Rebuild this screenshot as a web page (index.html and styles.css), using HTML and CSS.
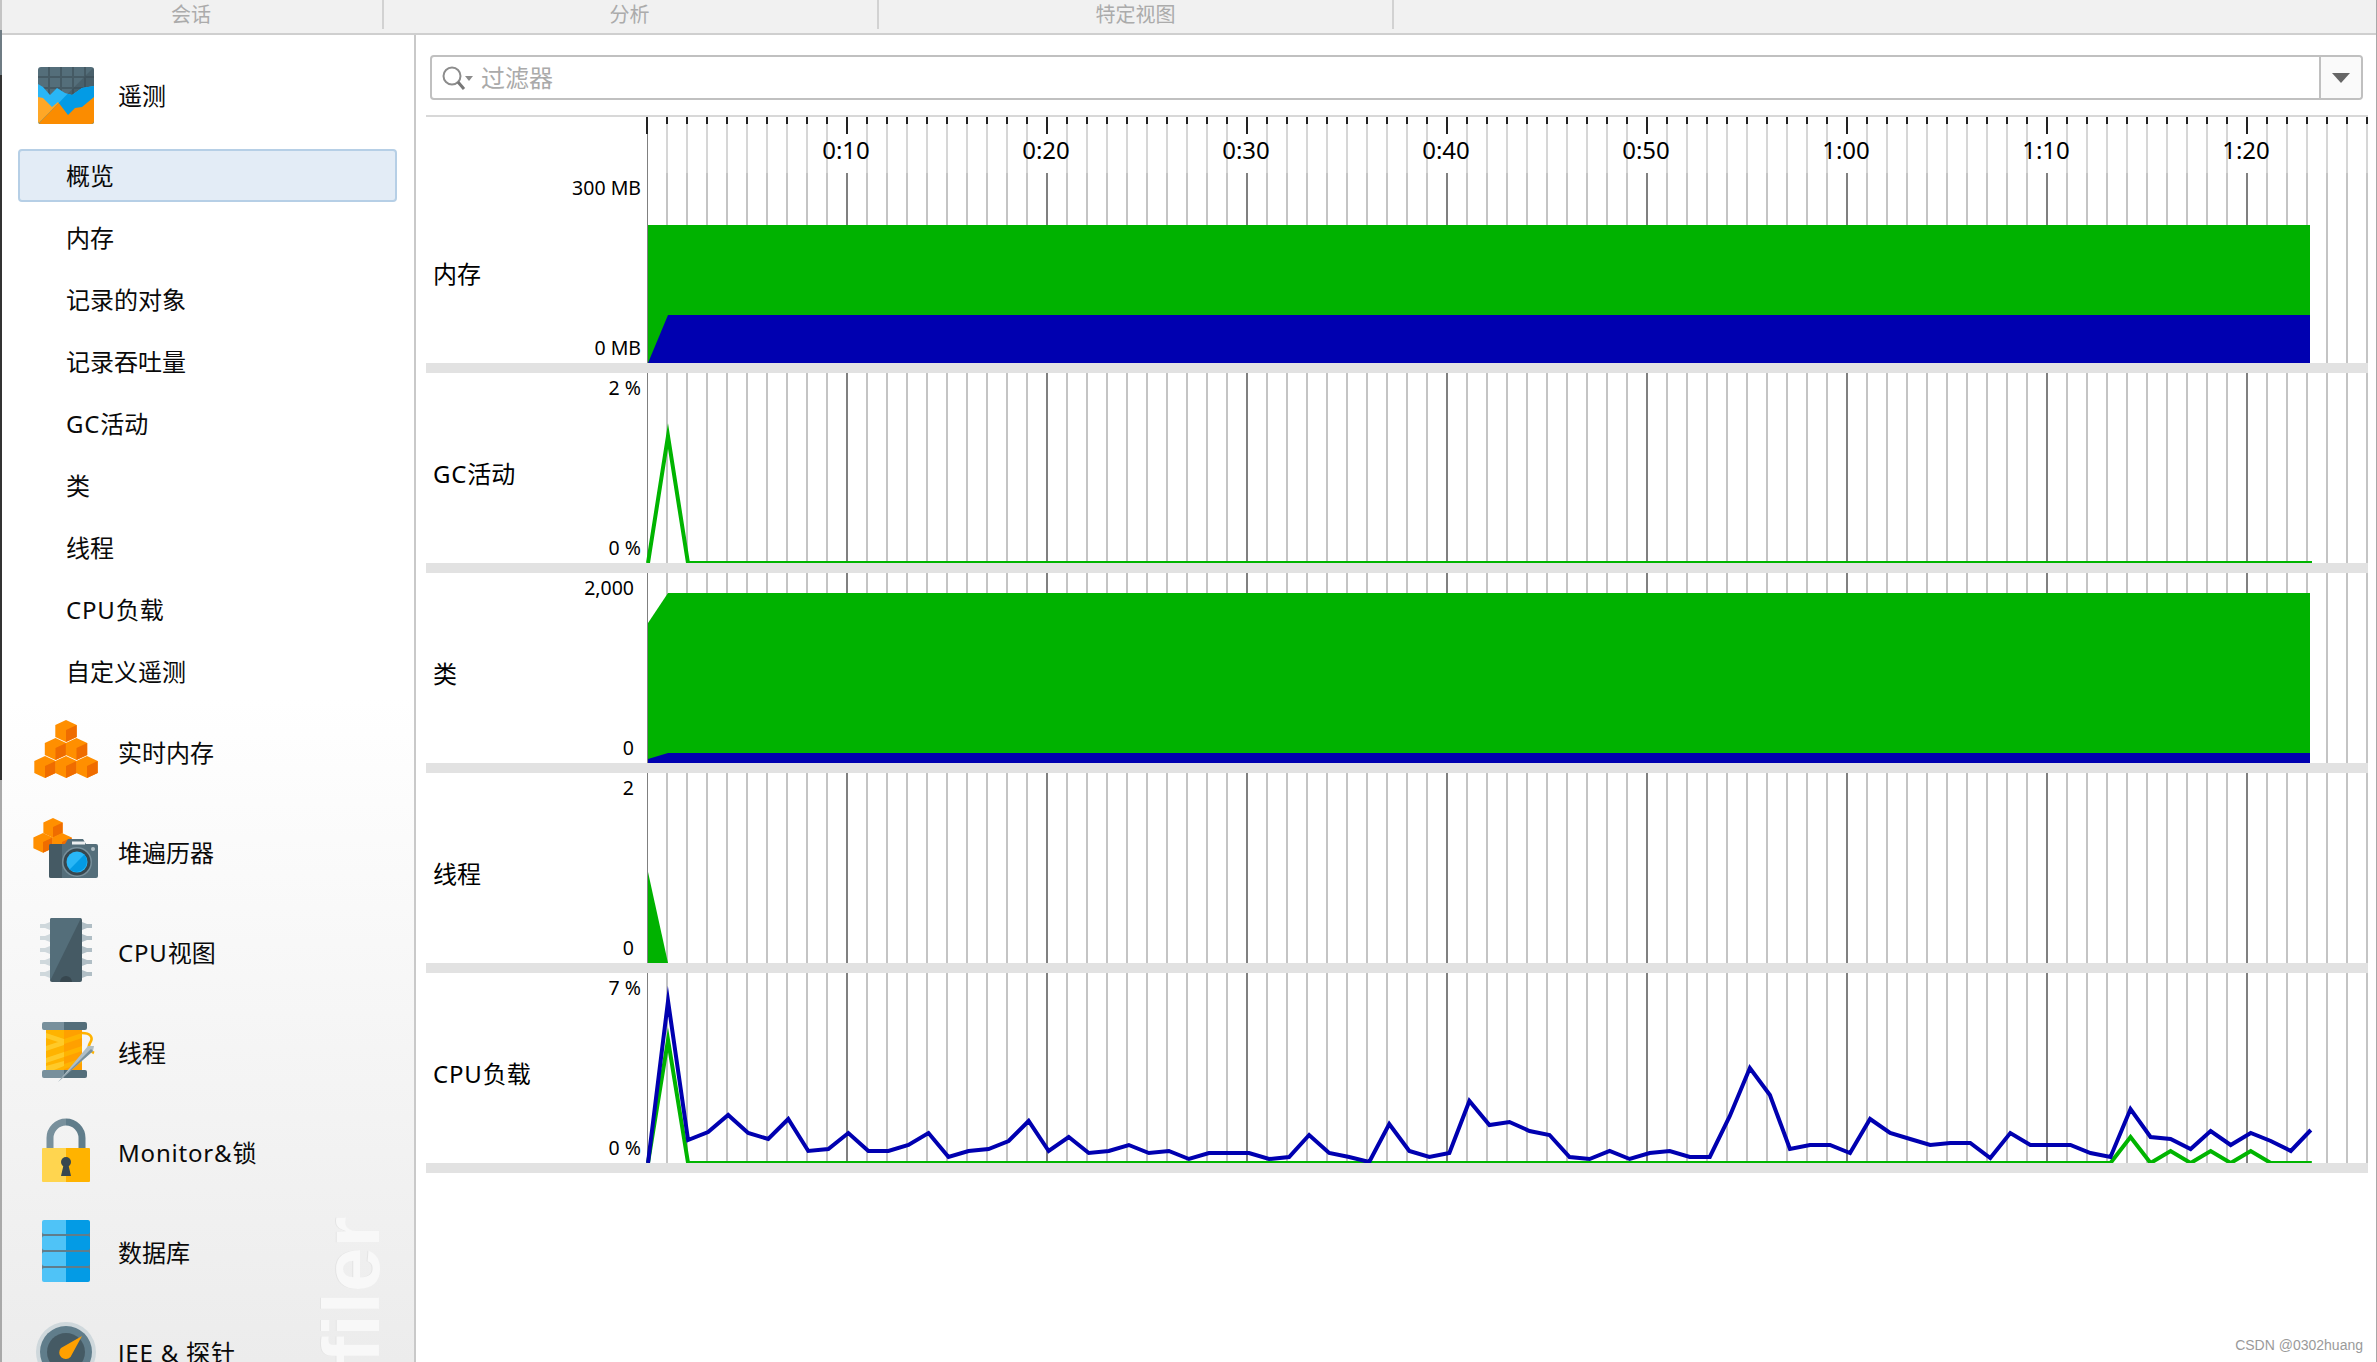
FILE: index.html
```html
<!DOCTYPE html>
<html lang="zh">
<head>
<meta charset="utf-8">
<title>JProfiler 遥测</title>
<link rel="stylesheet" href="styles.css">
</head>
<body>
<svg class="defs" aria-hidden="true">
  <defs>
    <g id="cube">
      <path fill="#ff8f00" d="M0 0L10.7 5V17L0 22L-10.7 17V5Z"/>
      <path fill="#ef6c00" d="M0 10L10.7 5V17L0 22Z"/>
    </g>
  </defs>
</svg>
<div class="screen">
  <div class="edge"></div>
  <div class="window">
    <div class="tabs">
      <div class="tab tab-session">会话</div>
      <div class="tab tab-analysis">分析</div>
      <div class="tab tab-views">特定视图</div>
    </div>
    <div class="body">
      <nav class="sidebar">
        <div class="section section-first">
          <svg class="icon" viewBox="0 0 64 64">
            <defs>
              <clipPath id="tile"><rect x="4" y="3" width="56" height="57" rx="3"/></clipPath>
              <clipPath id="tile-half"><path d="M60 3L4 60H60Z"/></clipPath>
            </defs>
            <g clip-path="url(#tile)">
              <rect x="4" y="3" width="56" height="57" fill="#546e7a"/>
              <path d="M15 3V40M27 3V40M39 3V40M51 3V40M4 13H60M4 24H60" stroke="#455a64" stroke-width="2" fill="none"/>
              <path d="M60 3L4 60H60Z" fill="#37474f" opacity=".35"/>
              <path fill="#29b6f6" d="M4 20L9 23L16 31L23 24L31 29L38 31L48 24L60 22V60H4Z"/>
              <path fill="#ffa726" d="M4 33L9 34L18 43L24 38L34 51L41 44L48 43L60 33V60H4Z"/>
              <g clip-path="url(#tile-half)">
                <path fill="#039be5" d="M4 20L9 23L16 31L23 24L31 29L38 31L48 24L60 22V60H4Z"/>
                <path fill="#fb8c00" d="M4 33L9 34L18 43L24 38L34 51L41 44L48 43L60 33V60H4Z"/>
              </g>
            </g>
          </svg>
          <span>遥测</span>
        </div>
        <ul class="subitems">
          <li class="subitem subitem-active">概览</li>
          <li class="subitem">内存</li>
          <li class="subitem">记录的对象</li>
          <li class="subitem">记录吞吐量</li>
          <li class="subitem"><span class="lat">GC</span>活动</li>
          <li class="subitem">类</li>
          <li class="subitem">线程</li>
          <li class="subitem"><span class="lat">CPU</span>负载</li>
          <li class="subitem">自定义遥测</li>
        </ul>
        <div class="section">
          <svg class="icon" viewBox="0 0 64 64">
            <use href="#cube" x="32" y="1"/>
            <use href="#cube" x="21.5" y="19"/>
            <use href="#cube" x="42.5" y="19"/>
            <use href="#cube" x="11" y="37"/>
            <use href="#cube" x="32" y="37"/>
            <use href="#cube" x="53" y="37"/>
          </svg>
          <span>实时内存</span>
        </div>
        <div class="section">
          <svg class="icon" viewBox="0 0 64 64">
            <g transform="translate(19 -1) scale(.9 .9)"><use href="#cube"/></g>
            <g transform="translate(9 14) scale(.9 .9)"><use href="#cube"/></g>
            <g transform="translate(28 14) scale(.9 .9)"><use href="#cube"/></g>
            <path fill="#546e7a" d="M17 25H31L34 20H49L52 25H62A2 2 0 0 1 64 27V57A2 2 0 0 1 62 59H17A2 2 0 0 1 15 57V27A2 2 0 0 1 17 25Z"/>
            <path fill="#455a64" d="M17 25H28V59H17A2 2 0 0 1 15 57V27A2 2 0 0 1 17 25Z"/>
            <rect x="38" y="22.5" width="13" height="3" fill="#eceff1"/>
            <circle cx="43" cy="43" r="15" fill="#78909c"/>
            <circle cx="43" cy="43" r="13.5" fill="#37474f"/>
            <circle cx="43" cy="43" r="10.5" fill="#29b6f6"/>
            <path fill="#039be5" d="M50.4 35.6A10.5 10.5 0 0 1 35.6 50.4Z"/>
            <circle cx="59" cy="30" r="2" fill="#b0bec5"/>
          </svg>
          <span>堆遍历器</span>
        </div>
        <div class="section">
          <svg class="icon" viewBox="0 0 64 64">
            <path fill="#cfd8dc" d="M16 3L11 5H6V9H11L16 11ZM16 15L11 17H6V21H11L16 23ZM16 27L11 29H6V33H11L16 35ZM16 39L11 41H6V45H11L16 47ZM16 51L11 53H6V57H11L16 59Z"/>
            <path fill="#b0bec5" d="M48 3L53 5H58V9H53L48 11ZM48 15L53 17H58V21H53L48 23ZM48 27L53 29H58V33H53L48 35ZM48 39L53 41H58V45H53L48 47ZM48 51L53 53H58V57H53L48 59Z"/>
            <rect x="16" y="-1" width="32" height="64" rx="2" fill="#455a64"/>
            <path fill="#546e7a" d="M18 -1H47L16 62V1A2 2 0 0 1 18 -1Z"/>
            <path fill="#37474f" d="M26 63A6 6 0 0 1 38 63Z"/>
          </svg>
          <span><span class="lat">CPU</span>视图</span>
        </div>
        <div class="section">
          <svg class="icon" viewBox="0 0 64 64">
            <rect x="12" y="10" width="36" height="42" fill="#ffb300"/>
            <rect x="30" y="10" width="18" height="42" fill="#ffa000"/>
            <path fill="#ffca28" d="M12 14L30 20V25L12 19ZM12 27L30 21V26L12 32ZM12 39L30 33V38L12 44ZM12 47L30 42V47L20 51H12Z"/>
            <path fill="#ffb300" d="M30 20L48 14V19L30 25ZM30 33L48 27V32L30 38ZM30 45L48 39V44L30 50Z"/>
            <path fill="#78909c" d="M10 3H30V11H10A2 2 0 0 1 8 9V5A2 2 0 0 1 10 3ZM10 51H30V59H10A2 2 0 0 1 8 57V53A2 2 0 0 1 10 51Z"/>
            <path fill="#546e7a" d="M30 3H51A2 2 0 0 1 53 5V9A2 2 0 0 1 51 11H30ZM30 51H51A2 2 0 0 1 53 53V57A2 2 0 0 1 51 59H30Z"/>
            <path d="M48 14C56 14 60 18 56 24C53 29 56 32 60 34" fill="none" stroke="#ffb300" stroke-width="2.6"/>
            <path fill="#b0bec5" d="M24 63L54 27L60 27L59 32Z"/>
            <path fill="#78909c" d="M24 63L57 30L59 32Z"/>
          </svg>
          <span>线程</span>
        </div>
        <div class="section">
          <svg class="icon" viewBox="0 0 64 64">
            <path d="M16 31V19A16 16 0 0 1 32 3" fill="none" stroke="#78909c" stroke-width="7"/>
            <path d="M32 3A16 16 0 0 1 48 19V31" fill="none" stroke="#607d8b" stroke-width="7"/>
            <path fill="#ffd54f" d="M9 29H32V63H9A1 1 0 0 1 8 62V30A1 1 0 0 1 9 29Z"/>
            <path fill="#ffb300" d="M32 29H55A1 1 0 0 1 56 30V62A1 1 0 0 1 55 63H32Z"/>
            <circle cx="32" cy="43" r="5" fill="#37474f"/>
            <path fill="#37474f" d="M30 44H34L37 57H27Z"/>
          </svg>
          <span class="lat">Monitor&amp;锁</span>
        </div>
        <div class="section">
          <svg class="icon" viewBox="0 0 64 64">
            <rect x="8" y="8" width="48" height="48" fill="#607d8b"/>
            <g fill="#4fc3f7">
              <path d="M10 1H32V15H10A2 2 0 0 1 8 13V3A2 2 0 0 1 10 1Z"/>
              <path d="M10 17H32V31H10A2 2 0 0 1 8 29V19A2 2 0 0 1 10 17Z"/>
              <path d="M10 33H32V47H10A2 2 0 0 1 8 45V35A2 2 0 0 1 10 33Z"/>
              <path d="M10 49H32V63H10A2 2 0 0 1 8 61V51A2 2 0 0 1 10 49Z"/>
            </g>
            <g fill="#039be5">
              <path d="M32 1H54A2 2 0 0 1 56 3V13A2 2 0 0 1 54 15H32Z"/>
              <path d="M32 17H54A2 2 0 0 1 56 19V29A2 2 0 0 1 54 31H32Z"/>
              <path d="M32 33H54A2 2 0 0 1 56 35V45A2 2 0 0 1 54 47H32Z"/>
              <path d="M32 49H54A2 2 0 0 1 56 51V61A2 2 0 0 1 54 63H32Z"/>
            </g>
          </svg>
          <span>数据库</span>
        </div>
        <div class="section">
          <svg class="icon" viewBox="0 0 64 64">
            <circle cx="32" cy="33" r="30" fill="#cfd8dc"/>
            <circle cx="32" cy="33" r="26" fill="#607d8b"/>
            <circle cx="32" cy="33" r="19" fill="#455a64"/>
            <path fill="#ffa000" d="M48 17L36.5 38A6 6 0 1 1 27 29Z"/>
          </svg>
          <span class="lat">JEE &amp; 探针</span>
        </div>
        <div class="brand">JProfiler</div>
      </nav>
      <main class="content">
        <div class="filter">
          <svg class="search" viewBox="0 0 32 24">
            <circle cx="10" cy="10" r="8.5" fill="none" stroke="#8c8c8c" stroke-width="2"/>
            <path d="M16 16L22 23" stroke="#777" stroke-width="3"/>
            <path d="M23 10H31L27 15Z" fill="#8c8c8c"/>
          </svg>
          <span class="filter-text">过滤器</span>
          <div class="filter-drop"><span class="caret"></span></div>
        </div>
        <div class="charts">
          <div class="ruler-row">
            <div class="ruler-gap"></div>
            <div class="ruler">
              <span class="mark">0:10</span><span class="mark">0:20</span><span class="mark">0:30</span><span class="mark">0:40</span><span class="mark">0:50</span><span class="mark">1:00</span><span class="mark">1:10</span><span class="mark">1:20</span>
            </div>
          </div>

          <div class="row">
            <div class="axis">
              <div class="ytick">300 MB</div>
              <div class="name">内存</div>
              <div class="ytick">0 MB</div>
            </div>
            <div class="plot">
              <svg class="graph" viewBox="646 173 1722 190">
                <path class="fill-green" d="M648 225H2310V363H648Z"/>
                <path class="fill-blue" d="M648 363L668 315H2310V363Z"/>
              </svg>
            </div>
          </div>

          <div class="row">
            <div class="axis">
              <div class="ytick">2 %</div>
              <div class="name"><span class="lat">GC</span>活动</div>
              <div class="ytick">0 %</div>
            </div>
            <div class="plot">
              <svg class="graph" viewBox="646 373 1722 190">
                <polyline class="line-green" points="648,563 668,436 688,563 2312,563"/>
              </svg>
            </div>
          </div>

          <div class="row">
            <div class="axis axis-count">
              <div class="ytick">2,000</div>
              <div class="name">类</div>
              <div class="ytick">0</div>
            </div>
            <div class="plot">
              <svg class="graph" viewBox="646 573 1722 190">
                <path class="fill-green" d="M648 623L668 593H2310V763H648Z"/>
                <path class="fill-blue" d="M648 759L668 753H2310V763H648Z"/>
              </svg>
            </div>
          </div>

          <div class="row">
            <div class="axis axis-count">
              <div class="ytick">2</div>
              <div class="name">线程</div>
              <div class="ytick">0</div>
            </div>
            <div class="plot">
              <svg class="graph" viewBox="646 773 1722 190">
                <path class="fill-green" d="M648 872L668 963H648Z"/>
              </svg>
            </div>
          </div>

          <div class="row">
            <div class="axis">
              <div class="ytick">7 %</div>
              <div class="name"><span class="lat">CPU</span>负载</div>
              <div class="ytick">0 %</div>
            </div>
            <div class="plot">
              <svg class="graph" viewBox="646 973 1722 190">
                <g transform="translate(648 0) scale(1.0017 1) translate(-648 0)">
                <polyline class="line-green" points="648,1163 668,1040 688,1163 2108,1163 2128,1137 2148,1163 2168,1151 2188,1163 2208,1151 2228,1163 2248,1151 2268,1163 2309,1163"/>
                <polyline class="line-blue" points="648,1163 668,1001 688,1140 708,1132 728,1115 748,1133 768,1139 788,1119 808,1151 828,1149 848,1133 868,1151 888,1151 908,1145 928,1133 948,1157 968,1151 988,1149 1008,1141 1028,1121 1048,1151 1068,1137 1088,1153 1108,1151 1128,1145 1148,1153 1168,1151 1188,1159 1208,1153 1228,1153 1248,1153 1268,1159 1288,1157 1308,1135 1328,1153 1348,1157 1368,1162 1388,1124 1408,1151 1428,1157 1448,1153 1468,1101 1488,1125 1508,1122 1528,1131 1548,1135 1568,1157 1588,1159 1608,1151 1628,1159 1648,1153 1668,1151 1688,1157 1708,1157 1728,1116 1748,1068 1768,1095 1788,1149 1808,1145 1828,1145 1848,1153 1868,1119 1888,1133 1908,1139 1928,1145 1948,1143 1968,1143 1988,1158 2008,1133 2028,1145 2048,1145 2068,1145 2088,1153 2108,1157 2128,1109 2148,1137 2168,1139 2188,1149 2208,1131 2228,1145 2248,1133 2268,1141 2288,1151 2308,1130"/>
                </g>
              </svg>
            </div>
          </div>
        </div>
        <div class="credit">CSDN @0302huang</div>
      </main>
    </div>
  </div>
</div>
</body>
</html>
```

FILE: styles.css
```css
* { box-sizing: border-box; }
html, body { margin: 0; padding: 0; }
body {
  background: #fff;
  color: #000;
  font-family: "Noto Sans", "Noto Sans CJK SC", sans-serif;
  font-size: 24px;
  overflow: hidden;
}
.defs { position: absolute; width: 0; height: 0; }
.lat { letter-spacing: .8px; }

.screen {
  display: flex;
  width: 2377px;
  height: 1362px;
  overflow: hidden;
}
.edge {
  flex: 0 0 2px;
  background: linear-gradient(180deg, #c4c4c4 0 30px, #6f7c84 30px 75px, #333 75px 780px, #a9a9a9 780px);
}
.window {
  flex: 1;
  display: flex;
  flex-direction: column;
  min-width: 0;
  border-right: 1px solid #a8a8a8;
}

/* tab bar */
.tabs {
  flex: 0 0 35px;
  display: flex;
  background: #f1f1f1;
  border-bottom: 2px solid #cfcfcf;
}
.tab {
  height: 29px;
  line-height: 30px;
  font-size: 20px;
  color: #ababab;
  text-align: center;
  border-right: 2px solid #d2d2d2;
}
.tab-session { width: 382px; padding-right: 2px; }
.tab-analysis { width: 495px; padding-right: 2px; }
.tab-views { width: 515px; }

.body { flex: 1; display: flex; min-height: 0; }

/* sidebar */
.sidebar {
  position: relative;
  flex: 0 0 414px;
  overflow: hidden;
  padding-top: 11px;
  border-right: 2px solid #c9c9c9;
  background: linear-gradient(180deg, #fff 0 50%, #ececec 100%);
  color: #0a0a0a;
}
.section {
  display: flex;
  align-items: center;
  gap: 20px;
  height: 100px;
  padding-left: 32px;
  position: relative;
  z-index: 1;
}
.section-first { margin-bottom: 3px; }
.section-first span { margin-bottom: 3px; }
.icon { flex: none; width: 64px; height: 64px; overflow: visible; }
.subitems {
  list-style: none;
  margin: 0 0 3px 16px;
  padding: 0;
  width: 379px;
}
.subitem {
  height: 53px;
  line-height: 53px;
  margin-bottom: 9px;
  padding-left: 48px;
}
.subitem:last-child { margin-bottom: 0; }
.subitem-active {
  padding-left: 46px;
  line-height: 49px;
  background: #e3ecf6;
  border: 2px solid #b6cfe6;
  border-radius: 4px;
}
.brand {
  position: absolute;
  right: 32px;
  top: 1162px;
  writing-mode: vertical-rl;
  transform: rotate(180deg);
  font-family: "Liberation Sans", sans-serif;
  font-weight: 700;
  font-size: 80px;
  line-height: 60px;
  height: 344px;
  color: #f8f8f8;
  text-shadow: 0 -1px 0 #e4e4e4;
}

/* content */
.content { position: relative; flex: 1; min-width: 0; }
.filter {
  display: flex;
  align-items: center;
  height: 45px;
  margin: 20px 13px 15px 14px;
  border: 2px solid #c0c0c0;
  border-radius: 4px;
  background: #fff;
}
.search { flex: none; width: 32px; height: 24px; margin-left: 10px; }
.filter-text { flex: 1; margin-left: 7px; color: #aaa; line-height: 41px; }
.filter-drop {
  flex: 0 0 42px;
  align-self: stretch;
  display: flex;
  align-items: center;
  justify-content: center;
  background: #fafafa;
  border-left: 2px solid #c0c0c0;
  border-radius: 0 3px 3px 0;
}
.caret {
  width: 0;
  height: 0;
  border-left: 9px solid transparent;
  border-right: 9px solid transparent;
  border-top: 10px solid #666;
}

/* charts */
.charts { margin: 0 8px 0 10px; border-top: 2px solid #d8d8d8; }
.ruler-row { display: flex; height: 56px; }
.ruler-gap { flex: 0 0 220px; }
.ruler {
  flex: 1;
  display: flex;
  padding-left: 100px;
  background-image:
    repeating-linear-gradient(90deg, #222 0 2px, transparent 2px 200px),
    repeating-linear-gradient(90deg, #222 0 2px, transparent 2px 20px),
    linear-gradient(90deg, transparent 1px, #808080 1px 2px, transparent 2px),
    repeating-linear-gradient(90deg,
      transparent 0 20px, #d6d6d6 20px 22px,
      transparent 22px 40px, #d6d6d6 40px 42px,
      transparent 42px 60px, #d6d6d6 60px 62px,
      transparent 62px 80px, #d6d6d6 80px 82px,
      transparent 82px 100px, #d6d6d6 100px 102px,
      transparent 102px 120px, #d6d6d6 120px 122px,
      transparent 122px 140px, #d6d6d6 140px 142px,
      transparent 142px 160px, #d6d6d6 160px 162px,
      transparent 162px 180px, #d6d6d6 180px 182px,
      transparent 182px 200px);
  background-size: 100% 17px, 100% 7px, 100% 100%, 100% 100%;
  background-repeat: no-repeat;
}
.mark {
  flex: 0 0 200px;
  margin-top: 16px;
  height: 34px;
  line-height: 34px;
  text-align: center;
  font-size: 24px;
}
.row {
  display: flex;
  height: 200px;
  border-bottom: 10px solid #e2e2e2;
}
.axis {
  flex: 0 0 220px;
  display: grid;
  grid-template-rows: 30px 1fr 30px;
  padding: 0 5px 0 7px;
}
.axis-count { padding-right: 12px; }
.ytick {
  font-size: 19.5px;
  line-height: 30px;
  text-align: right;
}
.name {
  align-self: center;
  padding-top: 11px;
  line-height: 32px;
  font-size: 24px;
}
.plot {
  flex: 1;
  min-width: 0;
  background-image:
    linear-gradient(90deg, #fff 0 1px, transparent 1px),
    repeating-linear-gradient(90deg, #808080 0 2px, transparent 2px 200px),
    repeating-linear-gradient(90deg, #c4c4c4 0 2px, transparent 2px 20px);
}
.graph { display: block; width: 1722px; height: 190px; }
.fill-green { fill: #00b200; }
.fill-blue { fill: #0000b0; }
.line-green, .line-blue {
  fill: none;
  stroke-width: 4;
  stroke-linejoin: miter;
  stroke-miterlimit: 10;
}
.line-green { stroke: #00b400; }
.line-blue { stroke: #0000b0; }

.credit {
  position: absolute;
  right: 13px;
  bottom: 8px;
  font-family: "Liberation Sans", sans-serif;
  font-size: 14px;
  line-height: 18px;
  color: #9a9a9a;
}
```
